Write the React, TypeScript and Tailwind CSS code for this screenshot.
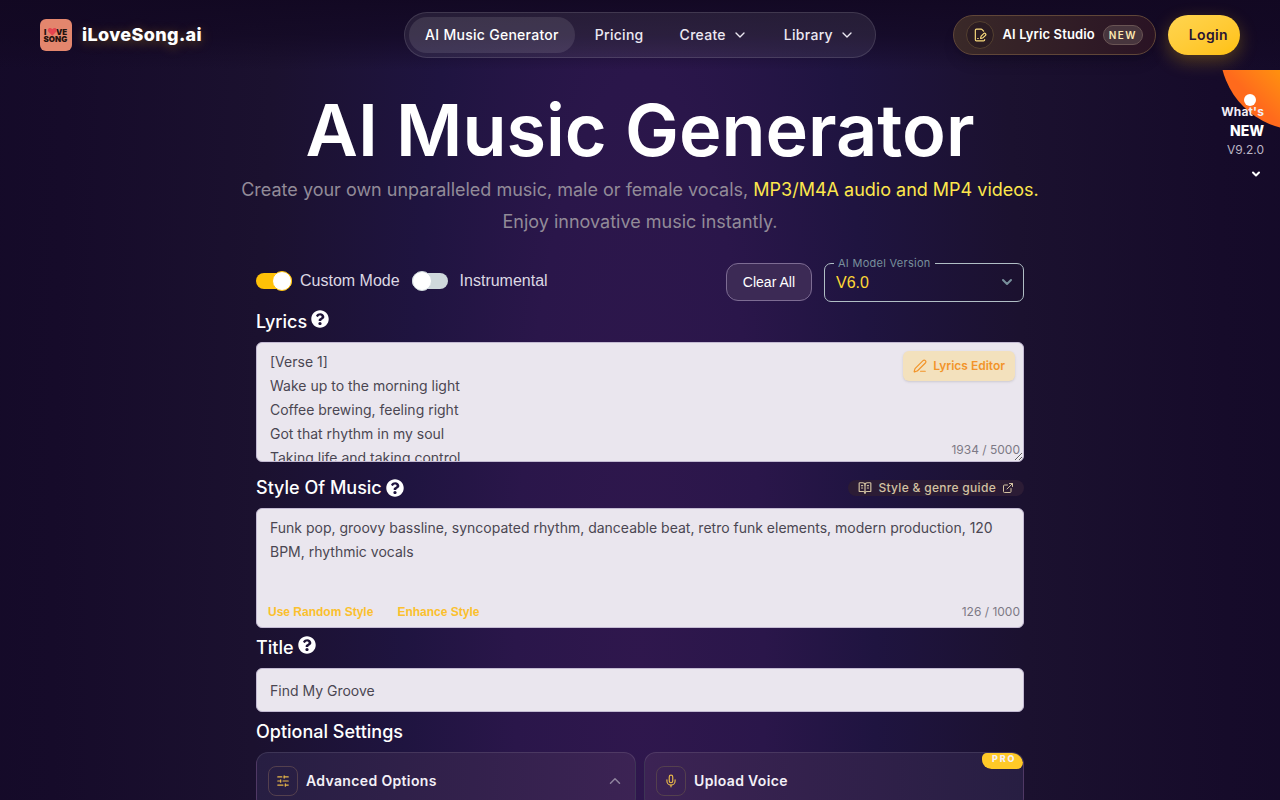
import { useState } from "react";
import type { ReactNode } from "react";
import {
  BookOpenText,
  ChevronDown,
  ChevronUp,
  ExternalLink,
  FilePenLine,
  Mic,
  PenLine,
  SlidersHorizontal,
} from "lucide-react";
import { FaQuestionCircle } from "react-icons/fa";

const DEFAULT_LYRICS = `[Verse 1]
Wake up to the morning light
Coffee brewing, feeling right
Got that rhythm in my soul
Taking life and taking control`;

const DEFAULT_STYLE =
  "Funk pop, groovy bassline, syncopated rhythm, danceable beat, retro funk elements, modern production, 120 BPM, rhythmic vocals";

const navItems = [
  { label: "AI Music Generator", active: true, menu: false },
  { label: "Pricing", active: false, menu: false },
  { label: "Create", active: false, menu: true },
  { label: "Library", active: false, menu: true },
];

function Logo() {
  return (
    <a href="#" className="flex items-center gap-[10px]">
      <svg viewBox="0 0 32 32" className="size-8" aria-hidden="true">
        <rect width="32" height="32" rx="6" fill="#e3866d" />
        <g fill="#24120f" fontFamily="Inter, sans-serif" fontWeight="900" fontSize="8">
          <text x="4" y="15.5">I</text>
          <text x="16" y="15.5">VE</text>
          <text x="3.5" y="23">SONG</text>
        </g>
        <path
          d="M12.300 16.800 8.400 12.700c-1.700-2.300 1.200-5.200 3.900-2.500 2.700-2.700 5.600.2 3.900 2.500z"
          fill="#e5454f"
        />
      </svg>
      <span className="text-lg font-extrabold tracking-[0.02em] text-white [text-shadow:0_2px_12px_rgba(255,193,7,0.35)]">
        iLoveSong.ai
      </span>
    </a>
  );
}

function Header() {
  return (
    <header className="grid h-[70px] grid-cols-[1fr_auto_1fr] items-center bg-gradient-to-b from-[#120822]/95 via-[#120822]/70 to-transparent px-10">
      <Logo />
      <nav className="flex items-center gap-1 rounded-full border border-white/12 bg-white/8 p-1 text-sm font-medium tracking-[0.02em] text-[#ece8f2]">
        {navItems.map((item) =>
          item.menu ? (
            <button key={item.label} className="flex h-9 items-center gap-1.5 rounded-full px-4">
              {item.label}
              <ChevronDown size={16} />
            </button>
          ) : (
            <a
              key={item.label}
              href="#"
              className={
                item.active
                  ? "flex h-9 items-center rounded-full bg-white/10 px-4 text-white"
                  : "flex h-9 items-center rounded-full px-4"
              }
            >
              {item.label}
            </a>
          )
        )}
      </nav>
      <div className="flex items-center justify-end gap-3">
        <a
          href="#"
          className="flex h-10 items-center gap-2 rounded-full border border-[#604638] bg-gradient-to-r from-[#3a2928] to-[#2a1324] px-3 text-[13px] font-semibold tracking-[0.01em] text-white shadow-lg"
        >
          <span className="flex size-7 items-center justify-center rounded-full border border-[#544030] bg-[#2b1c22] text-[#fcdc7d]">
            <FilePenLine size={14} />
          </span>
          AI Lyric Studio
          <span className="flex h-5 w-10 items-center justify-center rounded-full border border-[#695454] bg-[#47353d] text-[10px] tracking-[0.14em] text-[#fde9b0]">
            NEW
          </span>
        </a>
        <button className="h-10 rounded-full bg-gradient-to-br from-[#ffd54f] to-[#ffc107] pr-3 pl-[21px] text-sm font-semibold tracking-wide text-[#2a1533] shadow-[0_6px_18px_rgba(255,193,7,0.28)]">
          Login
        </button>
      </div>
    </header>
  );
}

// release badge hanging under the header on the right
function WhatsNew() {
  return (
    <aside className="absolute top-[70px] right-0 h-32 w-20 overflow-hidden">
      <div className="absolute -top-[100px] -right-[100px] size-40 rounded-full bg-gradient-to-tr from-[#ff6a1c] from-20% to-[#ffa000] to-45%" />
      <div className="absolute top-6 right-6 size-3 rounded-full bg-white" />
      <button className="relative flex w-full flex-col items-end pt-8 pr-4 text-right text-white">
        <span className="text-xs leading-5 font-bold tracking-[0.01em] text-[#f1edf5]">What's</span>
        <span className="text-sm leading-[18px] font-extrabold">NEW</span>
        <span className="text-xs leading-5 text-[#bcb6c6]">V9.2.0</span>
        <ChevronDown size={16} strokeWidth={4} className="mt-1.5 p-0.5" />
      </button>
    </aside>
  );
}

interface SwitchProps {
  id: string;
  label: string;
  wide?: boolean;
  checked: boolean;
  onChange: (value: boolean) => void;
}

function Switch({ id, label, wide, checked, onChange }: SwitchProps) {
  return (
    <div className={wide ? "flex items-center gap-3" : "flex items-center gap-2"}>
      <input
        id={id}
        type="checkbox"
        role="switch"
        checked={checked}
        onChange={(e) => onChange(e.target.checked)}
        className="relative h-4 w-9 appearance-none rounded-full bg-[#cfd8dc] before:absolute before:-top-0.5 before:left-0 before:size-5 before:rounded-full before:border before:border-[#cfd8dc] before:bg-white checked:bg-[#ffc107] checked:before:left-4 checked:before:border-[#ffc107]"
      />
      <label
        htmlFor={id}
        className="font-['Liberation_Sans',sans-serif] text-base leading-6 text-[#dcd8e3]"
      >
        {label}
      </label>
    </div>
  );
}

interface FieldLabelProps {
  htmlFor: string;
  help?: "raised" | "middle";
  children: ReactNode;
}

function FieldLabel({ htmlFor, help, children }: FieldLabelProps) {
  return (
    <div className="flex h-6 items-center gap-1 text-lg leading-6 font-medium text-white">
      <label htmlFor={htmlFor}>{children}</label>
      <button
        aria-label="Help"
        className={help === "raised" ? "self-start" : ""}
      >
        <FaQuestionCircle size={18} />
      </button>
    </div>
  );
}

const fieldClass =
  "block w-full rounded-md border border-[#c3bad2] bg-[#eae6ee] px-[13px] text-sm leading-6 text-[#4a4652] outline-none";

export default function App() {
  const [customMode, setCustomMode] = useState(true);
  const [instrumental, setInstrumental] = useState(false);
  const [model, setModel] = useState("V6.0");
  const [lyrics, setLyrics] = useState(DEFAULT_LYRICS);
  const [style, setStyle] = useState(DEFAULT_STYLE);
  const [title, setTitle] = useState("Find My Groove");

  const clearAll = () => {
    setLyrics("");
    setStyle("");
    setTitle("");
  };

  return (
    <div className="relative h-screen overflow-hidden bg-[#140a26] bg-[radial-gradient(ellipse_54%_420%_at_50%_85%,#2f174d_0%,#2a164a_18%,#1f1440_34%,#1b112f_56%,#160b2a_85%,#140a28_100%)] font-['Inter',sans-serif]">
      <Header />
      <WhatsNew />

      <main className="mx-auto max-w-3xl">
        <div className="-mx-10 pt-6 text-center">
          <h1 className="text-7xl leading-[72px] font-semibold text-white">AI Music Generator</h1>
          <p className="mt-2 text-lg leading-8 text-[#928b98]">
            Create your own unparalleled music, male or female vocals,{" "}
            <span className="text-[#fde74c]">MP3/M4A audio and MP4 videos.</span>
            <br />
            Enjoy innovative music instantly.
          </p>
        </div>

        {/* mode switches and model */}
        <div className="mt-4 flex items-end justify-between">
          <div className="flex h-[42px] items-center gap-3">
            <Switch id="custom" label="Custom Mode" checked={customMode} onChange={setCustomMode} />
            <Switch id="instrumental" label="Instrumental" wide checked={instrumental} onChange={setInstrumental} />
          </div>
          <div className="flex items-end gap-3">
            <button
              onClick={clearAll}
              className="mb-px h-[38px] rounded-xl border border-[#7d6c93] bg-[#3c2a55] px-4 font-['Liberation_Sans',sans-serif] text-sm text-white"
            >
              Clear All
            </button>
            <fieldset className="relative h-12 w-[200px] rounded-[7px] border border-[#b0bec5] px-2">
              <legend className="ml-px px-1 text-[11px] leading-[18px] tracking-wide text-[#78909c]">
                <label htmlFor="model" className="block">AI Model Version</label>
              </legend>
              <select
                id="model"
                value={model}
                onChange={(e) => setModel(e.target.value)}
                className="block h-[22px] w-full appearance-none bg-transparent pl-[3px] font-['Liberation_Sans',sans-serif] text-base leading-[22px] text-[#fdd835] outline-none"
              >
                <option>V6.0</option>
                <option>V5.0</option>
              </select>
              <ChevronDown
                size={16}
                strokeWidth={3}
                className="pointer-events-none absolute right-2 bottom-[11px] text-[#78909c]"
              />
            </fieldset>
          </div>
        </div>

        {/* lyrics */}
        <section className="mt-2">
          <FieldLabel htmlFor="lyrics" help="raised">Lyrics</FieldLabel>
          <div className="relative mt-2">
            <textarea
              id="lyrics"
              value={lyrics}
              onChange={(e) => setLyrics(e.target.value)}
              className={`${fieldClass} h-[120px] resize-y overflow-hidden pt-[7px]`}
            />
            <button className="absolute top-[9px] right-[9px] flex h-[30px] items-center gap-1.5 rounded-md bg-[#f3e1bd] px-2.5 text-xs font-semibold text-[#f2942a] shadow-sm">
              <PenLine size={14} />
              Lyrics Editor
            </button>
            <span className="absolute right-1 bottom-1 text-xs text-[#7d7985]">1934 / 5000</span>
          </div>
        </section>

        {/* style */}
        <section className="mt-[14px]">
          <div className="flex items-center justify-between">
            <FieldLabel htmlFor="style" help="middle">Style Of Music</FieldLabel>
            <a
              href="#"
              className="flex h-4 items-center gap-1.5 rounded-full bg-[#2c1c35] px-2.5 text-xs font-medium tracking-wide text-[#d3c2a2]"
            >
              <BookOpenText size={14} />
              Style &amp; genre guide
              <ExternalLink size={12} />
            </a>
          </div>
          <div className="relative mt-2">
            <textarea
              id="style"
              value={style}
              onChange={(e) => setStyle(e.target.value)}
              className={`${fieldClass} h-[120px] resize-none overflow-hidden pt-[7px]`}
            />
            <div className="absolute bottom-2 left-3 flex gap-6 font-['Liberation_Sans',sans-serif] text-xs font-bold text-[#fbc02d]">
              <button>Use Random Style</button>
              <button>Enhance Style</button>
            </div>
            <span className="absolute right-1 bottom-2 text-xs text-[#7d7985]">
              {style.length} / 1000
            </span>
          </div>
        </section>

        {/* title */}
        <section className="mt-2">
          <FieldLabel htmlFor="title" help="raised">Title</FieldLabel>
          <input
            id="title"
            value={title}
            onChange={(e) => setTitle(e.target.value)}
            className={`${fieldClass} mt-2 h-11`}
          />
        </section>

        <section className="mt-2">
          <h2 className="text-lg leading-6 font-medium text-white">Optional Settings</h2>
          <div className="mt-2 grid grid-cols-2 gap-2 text-sm font-semibold tracking-wide text-[#f3f0f7]">
            <button className="flex h-[58px] items-center gap-2 rounded-xl border border-white/10 bg-gradient-to-r from-[#271e42] to-[#3c2354] px-[11px]">
              <span className="flex size-[30px] items-center justify-center rounded-lg border border-[#54404e] text-[#e9b84a]">
                <SlidersHorizontal size={14} />
              </span>
              Advanced Options
              <ChevronUp size={18} className="ml-auto text-[#8f849e]" />
            </button>
            <button className="relative flex h-[58px] items-center gap-2 overflow-hidden rounded-xl border border-white/10 bg-gradient-to-r from-[#3c2354] to-[#271e42] px-[11px]">
              <span className="flex size-[30px] items-center justify-center rounded-lg border border-[#54404e] text-[#e9b84a]">
                <Mic size={14} />
              </span>
              Upload Voice
              <span className="absolute top-0 right-0 h-4 w-[41px] rounded-tl-md rounded-tr-xl rounded-br-lg rounded-bl-xl bg-[#ffc928] pl-2.5 text-left text-[9px] leading-3 font-extrabold tracking-[0.2em]">
                PRO
              </span>
            </button>
          </div>
        </section>
      </main>
    </div>
  );
}
